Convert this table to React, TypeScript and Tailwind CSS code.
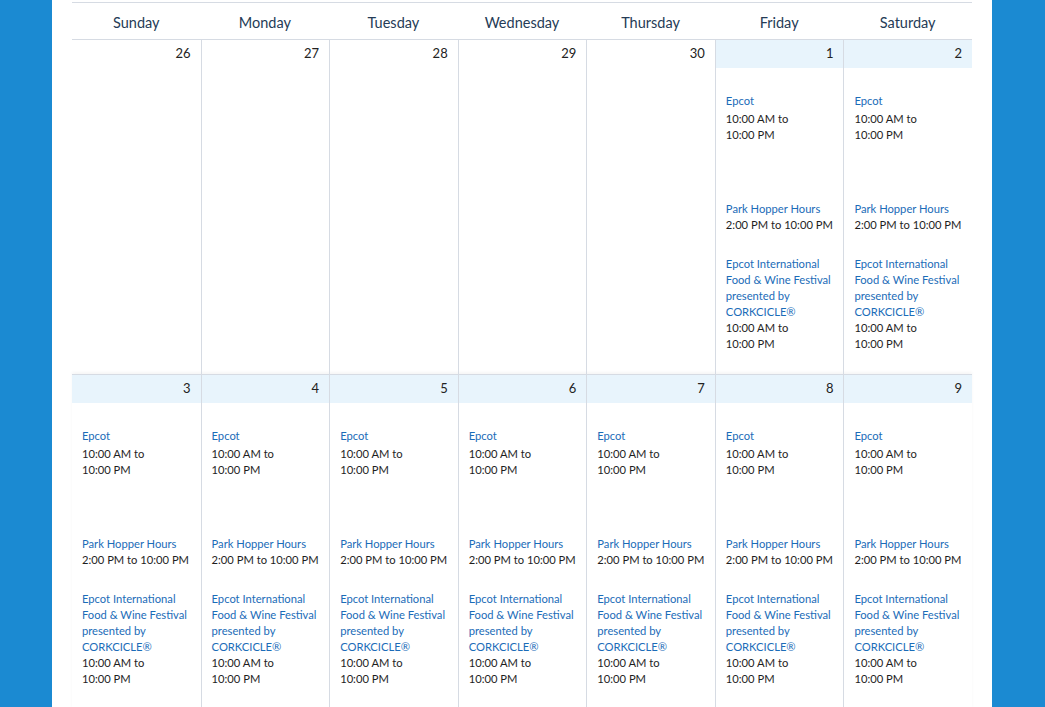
import React from "react";

const days = ["Sunday", "Monday", "Tuesday", "Wednesday", "Thursday", "Friday", "Saturday"];

type Cell = { n: number; active: boolean };

const week1: Cell[] = [
  { n: 26, active: false },
  { n: 27, active: false },
  { n: 28, active: false },
  { n: 29, active: false },
  { n: 30, active: false },
  { n: 1, active: true },
  { n: 2, active: true },
];
const week2: Cell[] = [3, 4, 5, 6, 7, 8, 9].map((n) => ({ n, active: true }));

function Events() {
  return (
    <div className="px-[10px] pt-[25px] text-[11.2px] leading-[16px] whitespace-nowrap">
      <div className="text-[#1b6cb8]">Epcot</div>
      <div className="mt-[2px] text-[#1e1e1e]">10:00 AM to</div>
      <div className="text-[#1e1e1e]">10:00 PM</div>
      <div className="mt-[58px] text-[#1b6cb8]">Park Hopper Hours</div>
      <div className="text-[#1e1e1e]">2:00 PM to 10:00 PM</div>
      <div className="mt-[23px] text-[#1b6cb8]">
        <div>Epcot International</div>
        <div>Food &amp; Wine Festival</div>
        <div>presented by</div>
        <div>CORKCICLE®</div>
      </div>
      <div className="text-[#1e1e1e]">10:00 AM to</div>
      <div className="text-[#1e1e1e]">10:00 PM</div>
    </div>
  );
}

function Week({ cells, first }: { cells: Cell[]; first: boolean }) {
  return (
    <div
      className={
        "grid grid-cols-7 " +
        (first ? "" : "border-t border-[#d6dbe3] shadow-[0_-2px_3px_rgba(0,0,0,0.04)]")
      }
    >
      {cells.map((c, i) => (
        <div
          key={i}
          className={
            "flex flex-col pb-[22px] min-w-0 " + (i > 0 ? "border-l border-[#d6dbe3]" : "")
          }
        >
          <div
            className={
              "h-[28px] flex items-center justify-end pr-[10px] text-[13px] text-[#222] " +
              (c.active ? "bg-[#e8f4fc]" : "")
            }
          >
            {c.n}
          </div>
          {c.active ? <Events /> : <div className="h-[284px]" />}
        </div>
      ))}
    </div>
  );
}

export default function App() {
  return (
    <div
      className="w-full h-[707px] overflow-hidden bg-[#1b8ad2] flex pl-[52px]"
      style={{ fontFamily: "Lato, 'Noto Sans', sans-serif" }}
    >
      <div className="w-[940px] bg-white px-[20px] pt-[2px]">
        <div className="border-t border-[#d6dbe3]">
          <div className="grid grid-cols-7 h-[37px] border-b border-[#d6dbe3]">
            {days.map((d) => (
              <div
                key={d}
                className="flex items-center justify-center text-[14.5px] text-[#253b56] pt-[4px]"
              >
                {d}
              </div>
            ))}
          </div>
          <Week cells={week1} first={true} />
          <Week cells={week2} first={false} />
        </div>
      </div>
    </div>
  );
}
